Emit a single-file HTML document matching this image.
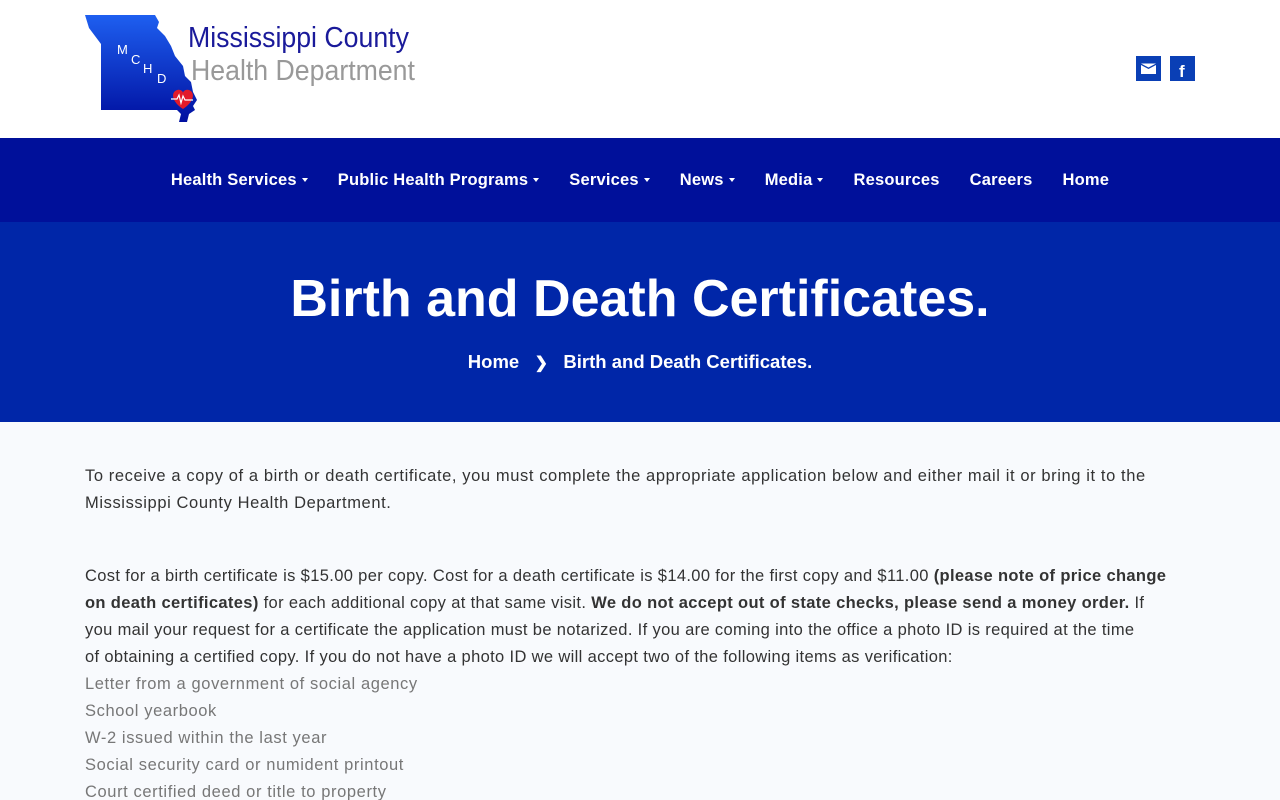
<!DOCTYPE html>
<html><head><meta charset="utf-8"><style>
*{margin:0;padding:0;box-sizing:border-box}
html,body{width:1280px;height:800px;overflow:hidden}
body{font-family:"Liberation Sans",sans-serif;background:#f8fafd}
header{height:138px;background:#fff;position:relative}
.logo{position:absolute;left:85px;top:14px}
.t1{position:absolute;left:188px;top:22px;font-size:29px;color:#1a1a9a;transform:scaleX(0.92);transform-origin:left}
.t2{position:absolute;left:191px;top:55px;font-size:29px;color:#999;transform:scaleX(0.92);transform-origin:left}
.soc{position:absolute;top:56px;width:25px;height:25px;background:#0a3fb5}
nav{height:84px;background:#00109a;display:flex;justify-content:center;align-items:center}
nav a{color:#fff;font-size:16.5px;font-weight:bold;margin:0 15px;text-decoration:none;letter-spacing:0.2px}
.car{display:inline-block;border-left:3.5px solid transparent;border-right:3.5px solid transparent;border-top:4px solid #fff;vertical-align:middle;margin-left:5px}
.hero{height:200px;background:#0026a8;color:#fff;text-align:center}
.hero h1{font-size:52px;padding-top:47px;font-weight:bold}
.bc{margin-top:22px;font-size:18.5px;font-weight:bold}
.main{padding:41px 85px;font-size:16.5px;line-height:27px;color:#333;letter-spacing:0.6px}
.l{white-space:nowrap;display:block}
.p2 .l{letter-spacing:0.35px}
.g{color:#777}
</style></head><body>
<header>
<svg class="logo" width="118" height="110" viewBox="0 0 118 110">
<defs><linearGradient id="lg" x1="0" y1="0" x2="0" y2="1"><stop offset="0" stop-color="#1e5ff0"/><stop offset="1" stop-color="#0010a0"/></linearGradient></defs>
<path d="M0 1 L70 1 L74 8 L72 14 L80 22 L86 32 L90 42 L98 52 L100 62 L106 68 L108 78 L112 86 L108 92 L110 96 L104 100 L102 108 L94 108 L96 100 L92 96 L16 96 L16 30 L10 22 L4 14 Z" fill="url(#lg)"/>
<text x="32" y="40" fill="#fff" font-size="13" font-family="Liberation Sans">M</text>
<text x="46" y="50" fill="#fff" font-size="13" font-family="Liberation Sans">C</text>
<text x="58" y="59" fill="#fff" font-size="13" font-family="Liberation Sans">H</text>
<text x="72" y="69" fill="#fff" font-size="13" font-family="Liberation Sans">D</text>
<path d="M98 95 C86 87 86 78 92 76 C95 75 98 77 98 79 C98 77 101 75 104 76 C110 78 110 87 98 95Z" fill="#e21a2a"/>
<path d="M86 85 L92 85 L94 81 L96 89 L98 82 L100 86 L108 86" stroke="#fff" stroke-width="1.2" fill="none"/>
</svg>
<div class="t1">Mississippi County</div>
<div class="t2">Health Department</div>
<div class="soc" style="left:1136px"><svg width="25" height="25"><path d="M5 9 L12.5 13 L20 9 L20 18 L5 18Z" fill="#fff"/><path d="M5 7.5 L20 7.5 L12.5 11.5Z" fill="#fff"/></svg></div>
<div class="soc" style="left:1170px"><svg width="25" height="25"><text x="9" y="21" fill="#fff" font-size="17" font-weight="bold" font-family="Liberation Sans">f</text></svg></div>
</header>
<nav><a>Health Services<span class="car"></span></a><a>Public Health Programs<span class="car"></span></a><a>Services<span class="car"></span></a><a>News<span class="car"></span></a><a>Media<span class="car"></span></a><a>Resources</a><a>Careers</a><a>Home</a></nav>
<div class="hero"><h1>Birth and Death Certificates.</h1><div class="bc">Home &nbsp;&nbsp;<span style="font-size:16px">&#x276F;</span>&nbsp;&nbsp; Birth and Death Certificates.</div></div>
<div class="main">
<p>To receive a copy of a birth or death certificate, you must complete the appropriate application below and either mail it or bring it to the Mississippi County Health Department.</p>
<p class="p2" style="margin-top:46px"><span class="l">Cost for a birth certificate is $15.00 per copy. Cost for a death certificate is $14.00 for the first copy and $11.00 <b>(please note of price change</b></span><span class="l"><b>on death certificates)</b> for each additional copy at that same visit. <b>We do not accept out of state checks, please send a money order.</b> If</span><span class="l">you mail your request for a certificate the application must be notarized. If you are coming into the office a photo ID is required at the time</span><span class="l">of obtaining a certified copy. If you do not have a photo ID we will accept two of the following items as verification:</span></p>
<div class="g">Letter from a government of social agency<br>School yearbook<br>W-2 issued within the last year<br>Social security card or numident printout<br>Court certified deed or title to property</div>
</div>
</body></html>
